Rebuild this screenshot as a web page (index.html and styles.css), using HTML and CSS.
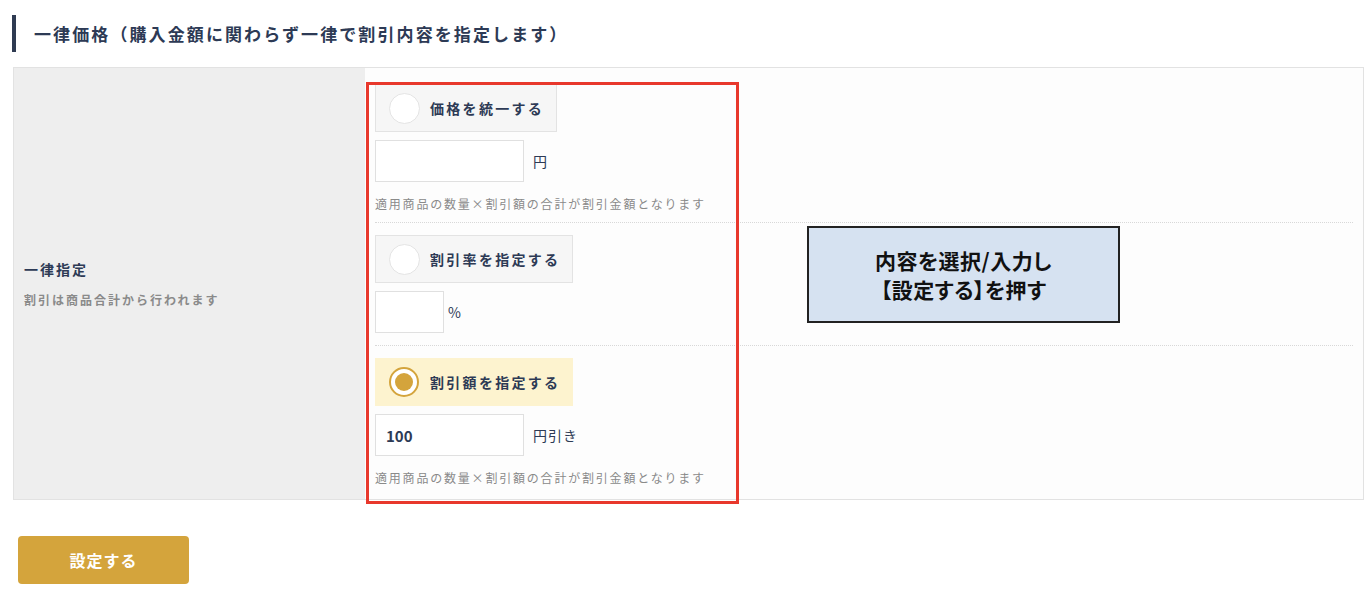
FILE: index.html
```html
<!doctype html>
<html lang="ja">
  <head>
    <meta charset="UTF-8" />
    <meta name="viewport" content="width=device-width, initial-scale=1.0" />
    <title>一律価格</title>
    <link rel="stylesheet" href="styles.css">
  </head>
  <body>
    <div class="page">
      <h2 class="heading">一律価格（購入金額に関わらず一律で割引内容を指定します）</h2>

      <div class="form-table">
        <div class="form-th">
          <div class="th-title">一律指定</div>
          <div class="th-note">割引は商品合計から行われます</div>
        </div>
        <div class="form-td">
          <div class="group first">
            <label class="radio">
              <span class="circle"></span>
              <span class="radio-text">価格を統一する</span>
            </label>
            <div class="field">
              <input type="text" class="input" />
              <span class="unit">円</span>
            </div>
            <div class="note">適用商品の数量×割引額の合計が割引金額となります</div>
          </div>
          <div class="group">
            <label class="radio">
              <span class="circle"></span>
              <span class="radio-text">割引率を指定する</span>
            </label>
            <div class="field">
              <input type="text" class="input small" />
              <span class="unit pct">%</span>
            </div>
          </div>
          <div class="group last">
            <label class="radio checked">
              <span class="circle"></span>
              <span class="radio-text">割引額を指定する</span>
            </label>
            <div class="field">
              <input type="text" class="input" value="100" />
              <span class="unit">円引き</span>
            </div>
            <div class="note">適用商品の数量×割引額の合計が割引金額となります</div>
          </div>
        </div>
      </div>

      <button class="submit">設定する</button>

      <!-- annotations -->
      <div class="mark-red"></div>
      <div class="mark-blue">内容を選択/入力し<br />【設定する】を押す</div>
    </div>
  </body>
</html>
```

FILE: styles.css
```css
body {
  margin: 0;
  font-family: "Noto Sans CJK JP", "Noto Sans", sans-serif;
  color: #2d3a55;
  background: #fff;
}

.page {
  position: relative;
  padding: 15px 6px 0 13px;
  height: 577px;
}

.heading {
  margin: 0 0 15px -1px;
  height: 37px;
  border-left: 4px solid #2f3b52;
  padding-left: 18px;
  font-size: 17px;
  font-weight: bold;
  letter-spacing: 2.1px;
  line-height: 37px;
  color: #2d3a55;
}

.form-table {
  display: flex;
  border: 1px solid #e2e2e2;
}

.form-th {
  width: 351px;
  flex-shrink: 0;
  background: #eeeeee;
  padding-left: 10px;
  box-sizing: border-box;
  display: flex;
  flex-direction: column;
  justify-content: center;
}

.th-title {
  font-size: 14px;
  font-weight: bold;
  letter-spacing: 2px;
  line-height: 20px;
}

.th-note {
  margin-top: 12px;
  font-size: 12px;
  font-weight: bold;
  letter-spacing: 2px;
  color: #8a8a8a;
  line-height: 18px;
}

.form-td {
  flex: 1;
  background: #fdfdfd;
  padding: 4px 10px 0 10px;
}

.group {
  padding: 12px 0 12px;
  border-bottom: 1px dotted #d8d8d8;
}

.group.first {
  padding-top: 12px;
}

.group.last {
  border-bottom: none;
  padding-bottom: 15px;
}

.radio {
  display: inline-flex;
  align-items: center;
  height: 48px;
  box-sizing: border-box;
  padding: 0 12px 0 13px;
  background: #f6f6f6;
  border: 1px solid #e3e3e3;
  cursor: pointer;
}

.radio.checked {
  background: #fdf3cf;
  border-color: #fdf3cf;
}

.circle {
  width: 31px;
  height: 31px;
  box-sizing: border-box;
  border-radius: 50%;
  background: #fff;
  border: 1px solid #e4e4e4;
  margin-right: 10px;
  display: flex;
  align-items: center;
  justify-content: center;
}

.radio.checked .circle {
  width: 30px;
  height: 30px;
  border: 2px solid #d4a43c;
  margin-right: 11px;
}

.radio.checked .circle::after {
  content: "";
  width: 18px;
  height: 18px;
  border-radius: 50%;
  background: #d4a43c;
}

.radio-text {
  font-size: 14px;
  font-weight: bold;
  letter-spacing: 2.3px;
}

.field {
  display: flex;
  align-items: center;
  margin-top: 8px;
}

.input {
  width: 149px;
  height: 42px;
  box-sizing: border-box;
  border: 1px solid #e0e0e0;
  background: #fff;
  padding: 0 10px;
  font-family: inherit;
  font-size: 15px;
  font-weight: bold;
  color: #2d3a55;
  outline: none;
}

.input.small {
  width: 69px;
}

.unit {
  margin-left: 9px;
  font-size: 14px;
  letter-spacing: 1px;
}

.unit.pct {
  margin-left: 4px;
}

.note {
  margin: 12px 0 -4px;
  font-size: 12px;
  line-height: 20px;
  letter-spacing: 1.8px;
  color: #8a8a8a;
}

.submit {
  display: block;
  margin: 36px 0 0 5px;
  width: 171px;
  height: 48px;
  border: none;
  border-radius: 4px;
  background: #d4a43c;
  color: #fff;
  font-family: inherit;
  font-size: 16px;
  font-weight: bold;
  letter-spacing: 1px;
  cursor: pointer;
}

.mark-red {
  position: absolute;
  left: 366px;
  top: 82px;
  width: 373px;
  height: 422px;
  box-sizing: border-box;
  border: 3px solid #e8382c;
}

.mark-blue {
  position: absolute;
  left: 807px;
  top: 226px;
  width: 313px;
  height: 97px;
  box-sizing: border-box;
  border: 2px solid #222;
  background: #d6e2f1;
  color: #111;
  font-size: 21px;
  font-weight: bold;
  line-height: 29px;
  letter-spacing: 0.5px;
  font-feature-settings: "palt";
  text-align: center;
  display: flex;
  align-items: center;
  justify-content: center;
}
```
